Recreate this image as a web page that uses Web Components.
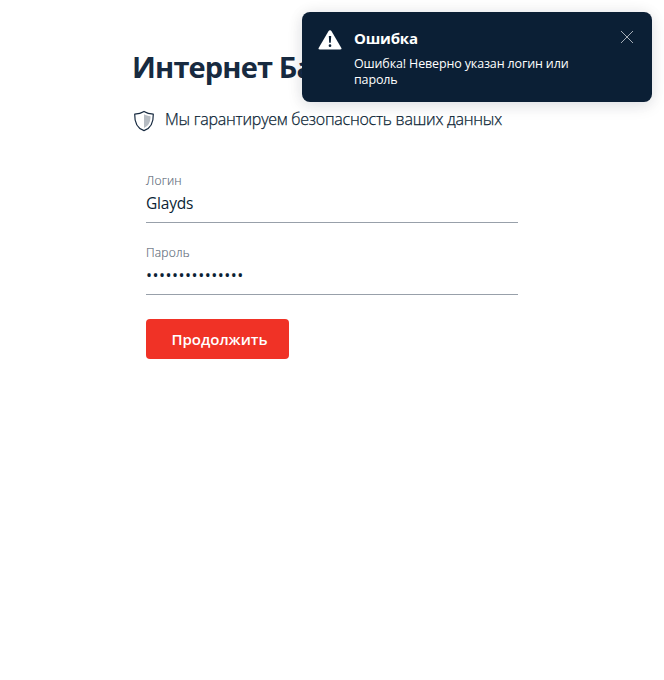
<!DOCTYPE html>
<html lang="ru">
<head>
<meta charset="utf-8">
<title>Интернет Банк</title>
<style>
html,body{margin:0;height:100%;background:#fff;overflow:hidden}
body{font-family:"Open Sans","Noto Sans",sans-serif;color:#172a40}
</style>
</head>
<body>
<login-page></login-page>
<script>
const define=(name,html)=>{
  customElements.define(name,class extends HTMLElement{
    constructor(){
      super();
      const t=document.createElement('template');
      t.innerHTML=html;
      this.attachShadow({mode:'open'}).append(t.content.cloneNode(true));
    }
  });
};

define('page-heading',`<style>
:host{display:block;height:40px;font-size:29px;line-height:40px;font-weight:700;letter-spacing:-.85px;white-space:nowrap;color:#172a40}
</style><slot></slot>`);

define('security-note',`<style>
:host{display:flex;align-items:center;height:24px;gap:10px;font-size:16px;line-height:24px;font-weight:300;white-space:nowrap;color:#0b1f35}
svg{display:block;flex:none;margin-top:3px}
span{letter-spacing:-.24px;-webkit-text-stroke:.25px #0b1f35}
</style>
<svg width="22" height="22" viewBox="0 0 22 22">
<path d="M11 1.4C8.3 3.2 5.2 4 1.7 4.2C1.5 12.3 4.2 18.4 11 20.6C17.8 18.4 20.5 12.3 20.3 4.2C16.8 4 13.7 3.2 11 1.4Z" fill="#fff" stroke="#172a40" stroke-width="1.2" stroke-linejoin="round"/>
<path d="M11 4.2C13 5.3 15 6 17.6 6.3C17.4 12 15.7 16 11 18Z" fill="#b6bcc3"/>
</svg><span><slot></slot></span>`);

define('text-field',`<style>
:host{display:block;box-sizing:border-box;height:52px;padding-top:1px;border-bottom:1px solid #98a0aa;white-space:nowrap}
.label{height:17px;font-size:12px;line-height:18px;font-weight:300;letter-spacing:.22px;color:#5c6a79;-webkit-text-stroke:.15px #5c6a79}
.value{height:26px;font-size:15.5px;line-height:28px;font-weight:400;letter-spacing:-.2px;color:#0b1f35}
</style>
<div class="label"><slot name="label"></slot></div>
<div class="value"><slot></slot></div>`);

define('submit-button',`<style>
:host{display:flex;box-sizing:border-box;width:143px;height:40px;padding:0 0 0 4px;align-items:center;justify-content:center;border-radius:4px;background:#f03226;color:#fff;font-size:15px;font-weight:600;white-space:nowrap}
</style><slot></slot>`);

define('error-toast',`<style>
:host{display:flex;box-sizing:border-box;width:350px;height:90px;padding:16px;gap:12px;border-radius:8px;background:#0b1f35;color:#fff;box-shadow:0 0 16px rgba(11,31,53,.06),0 4px 16px rgba(11,31,53,.1)}
svg{display:block;flex:none}
.warn{margin-top:1px}
.close{margin-top:2px;margin-right:2px}
.text{flex:1;margin-top:-1px;white-space:nowrap}
.title{height:22px;font-size:15px;line-height:22px;font-weight:700;letter-spacing:-.2px}
.message{margin-top:7px;font-size:12.5px;line-height:16px;font-weight:400;letter-spacing:-.14px}
</style>
<svg class="warn" width="24" height="24" viewBox="0 0 24 24">
<path d="M12 1.2Q13 1.2 13.7 2.4L23.2 18.8Q24.2 20.6 22.2 20.6H1.8Q-.2 20.6 .8 18.8L10.3 2.4Q11 1.2 12 1.2Z" fill="#fff"/>
<path d="M10.8 7H13.2L12.8 13.8H11.2Z" fill="#0b1f35"/><circle cx="12" cy="16.7" r="1.35" fill="#0b1f35"/>
</svg>
<div class="text"><div class="title"><slot name="title"></slot></div><div class="message"><slot></slot></div></div>
<svg class="close" width="14" height="14" viewBox="0 0 14 14"><path d="M1 1L13 13M13 1L1 13" stroke="#a5adb7" stroke-width="1" fill="none"/></svg>`);

define('login-page',`<style>
:host{display:block;position:relative;height:680px;box-sizing:border-box;padding:47px 133px 0 132px}
.note{margin:20px 0 0 1px}
form{display:flex;flex-direction:column;gap:20px;margin:40px 13px 0 14px}
submit-button{margin-top:4px}
error-toast{position:absolute;top:12px;right:12px}
.dots{font-size:16px;letter-spacing:.5px}
</style>
<page-heading>Интернет Банк</page-heading>
<security-note class="note">Мы гарантируем безопасность ваших данных</security-note>
<form>
<text-field><span slot="label">Логин</span>Glayds</text-field>
<text-field><span slot="label">Пароль</span><span class="dots">•••••••••••••••</span></text-field>
<submit-button>Продолжить</submit-button>
</form>
<error-toast><span slot="title">Ошибка</span>Ошибка! Неверно указан логин или<br>пароль</error-toast>`);
</script>
</body>
</html>
